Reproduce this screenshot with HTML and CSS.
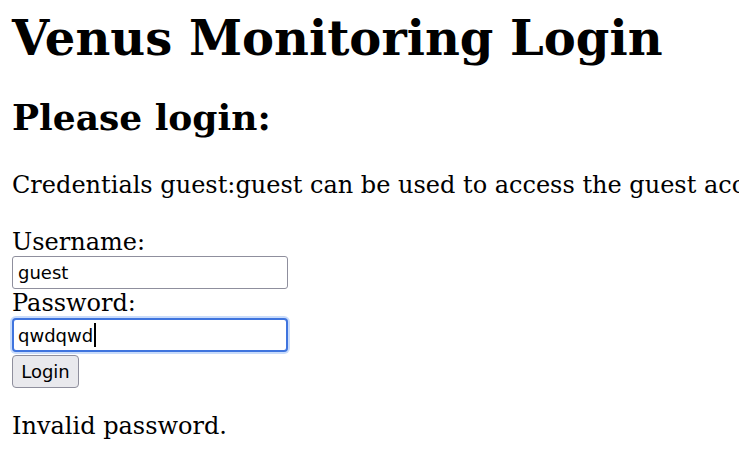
FILE: index.html
```html
<!DOCTYPE html>
<html lang="en">
<head>
<meta charset="utf-8">
<title>Venus Monitoring Login</title>
<link rel="stylesheet" href="styles.css">
</head>
<body>
<h1 class="title">Venus Monitoring Login</h1>
<h2 class="subtitle">Please login:</h2>
<p class="note">Credentials guest:guest can be used to access the guest account.</p>
<form class="login-form">
  <label class="field-label" for="username">Username:</label>
  <input class="field" id="username" type="text" value="guest">
  <label class="field-label" for="password">Password:</label>
  <div class="field field-focused"><span class="field-text">qwdqwd</span><span class="caret"></span></div>
  <button class="btn" type="button">Login</button>
</form>
<p class="error">Invalid password.</p>
</body>
</html>
```

FILE: styles.css
```css
html, body {
  overflow: hidden;
}
body {
  margin: 0;
  padding: 10px 12px 0 12px;
  font-family: "DejaVu Serif", serif;
  font-size: 24px;
  color: #000;
  background: #fff;
  white-space: nowrap;
}
.title {
  margin: 0 0 30px 0;
  font-size: 48px;
  font-weight: bold;
  line-height: 56px;
}
.subtitle {
  margin: 0 0 33px 0;
  font-size: 36px;
  font-weight: bold;
  line-height: 42px;
}
.note {
  margin: 0 0 29px 0;
  line-height: 28px;
}
.login-form {
  display: flex;
  flex-direction: column;
  align-items: flex-start;
}
.field-label {
  display: block;
  line-height: 28px;
}
.field {
  box-sizing: border-box;
  width: 276px;
  height: 33px;
  margin: 0;
  padding: 0 5px;
  border: 1.5px solid #8f8f9d;
  border-radius: 3px;
  font-family: "DejaVu Sans", sans-serif;
  font-size: 18px;
  color: #000;
  background: #fff;
  outline: none;
}
.field-focused {
  display: flex;
  align-items: center;
  height: 34px;
  margin-top: 1px;
  border: 2.5px solid #3f74de;
  border-radius: 4px;
  box-shadow: 0 0 0 2px #c9dcfb;
  padding: 0 4px;
}
.caret {
  display: inline-block;
  width: 1.5px;
  height: 24px;
  background: #000;
  margin-left: 1px;
}
.btn {
  box-sizing: border-box;
  margin: 3px 0 0 0;
  width: 67px;
  height: 33px;
  padding: 0;
  border: 1.5px solid #8f8f9d;
  border-radius: 4px;
  background: #e9e9ed;
  font-family: "DejaVu Sans", sans-serif;
  font-size: 18px;
  color: #000;
}
.error {
  margin: 24px 0 0 0;
  line-height: 28px;
}
```
